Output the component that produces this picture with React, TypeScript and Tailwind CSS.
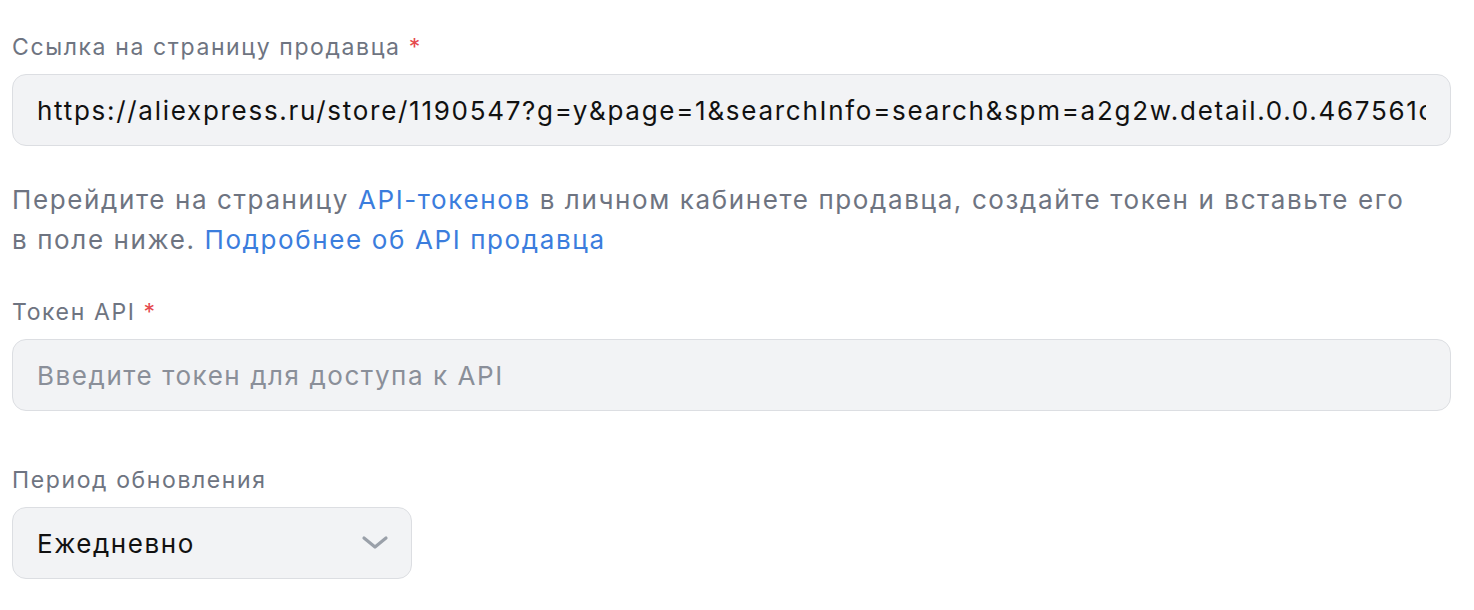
export default function App() {
  return (
    <div className="min-h-screen bg-white pl-3 pr-[23px] pt-[30px] font-['Inter','Noto_Sans',sans-serif]">
      <div className="flex flex-col">
        <label className="text-[23px] leading-[34px] tracking-[0.07em] text-[#6e7481]">
          Ссылка на страницу продавца <span className="text-[#e5484d]">*</span>
        </label>
        <input
          readOnly
          value="https://aliexpress.ru/store/1190547?g=y&page=1&searchInfo=search&spm=a2g2w.detail.0.0.467561cc"
          className="mt-[10px] h-[72px] w-full rounded-[14px] border border-[#dcdee2] bg-[#f2f3f5] px-6 text-[26px] tracking-[0.066em] text-[#111] outline-none"
        />

        <p className="mt-[34px] max-w-[1410px] text-[26px] leading-[40px] tracking-[0.062em] text-[#6e7481]">
          Перейдите на страницу <a className="text-[#3b7ddd]">API-токенов</a> в личном кабинете продавца, создайте токен и вставьте его в поле ниже.{" "}
          <a className="text-[#3b7ddd]">Подробнее об API продавца</a>
        </p>

        <label className="mt-[35px] text-[23px] leading-[34px] tracking-[0.07em] text-[#6e7481]">
          Токен API <span className="text-[#e5484d]">*</span>
        </label>
        <input
          placeholder="Введите токен для доступа к API"
          className="mt-[10px] h-[72px] w-full rounded-[14px] border border-[#dcdee2] bg-[#f2f3f5] px-6 text-[26px] tracking-[0.06em] text-[#111] placeholder:text-[#8a8f99] outline-none"
        />

        <label className="mt-[52px] text-[23px] leading-[34px] tracking-[0.07em] text-[#6e7481]">Период обновления</label>
        <div className="mt-[10px] flex h-[72px] w-[400px] items-center justify-between rounded-[14px] border border-[#dcdee2] bg-[#f2f3f5] pl-6 pr-[21px]">
          <span className="text-[26px] tracking-[0.06em] text-[#111]">Ежедневно</span>
          <svg width="30" height="30" viewBox="0 0 30 30" fill="none" stroke="#9aa0a9" strokeWidth="3.2" strokeLinecap="round" strokeLinejoin="round">
            <path d="M4 10l11 9 11-9" />
          </svg>
        </div>
      </div>
    </div>
  );
}
